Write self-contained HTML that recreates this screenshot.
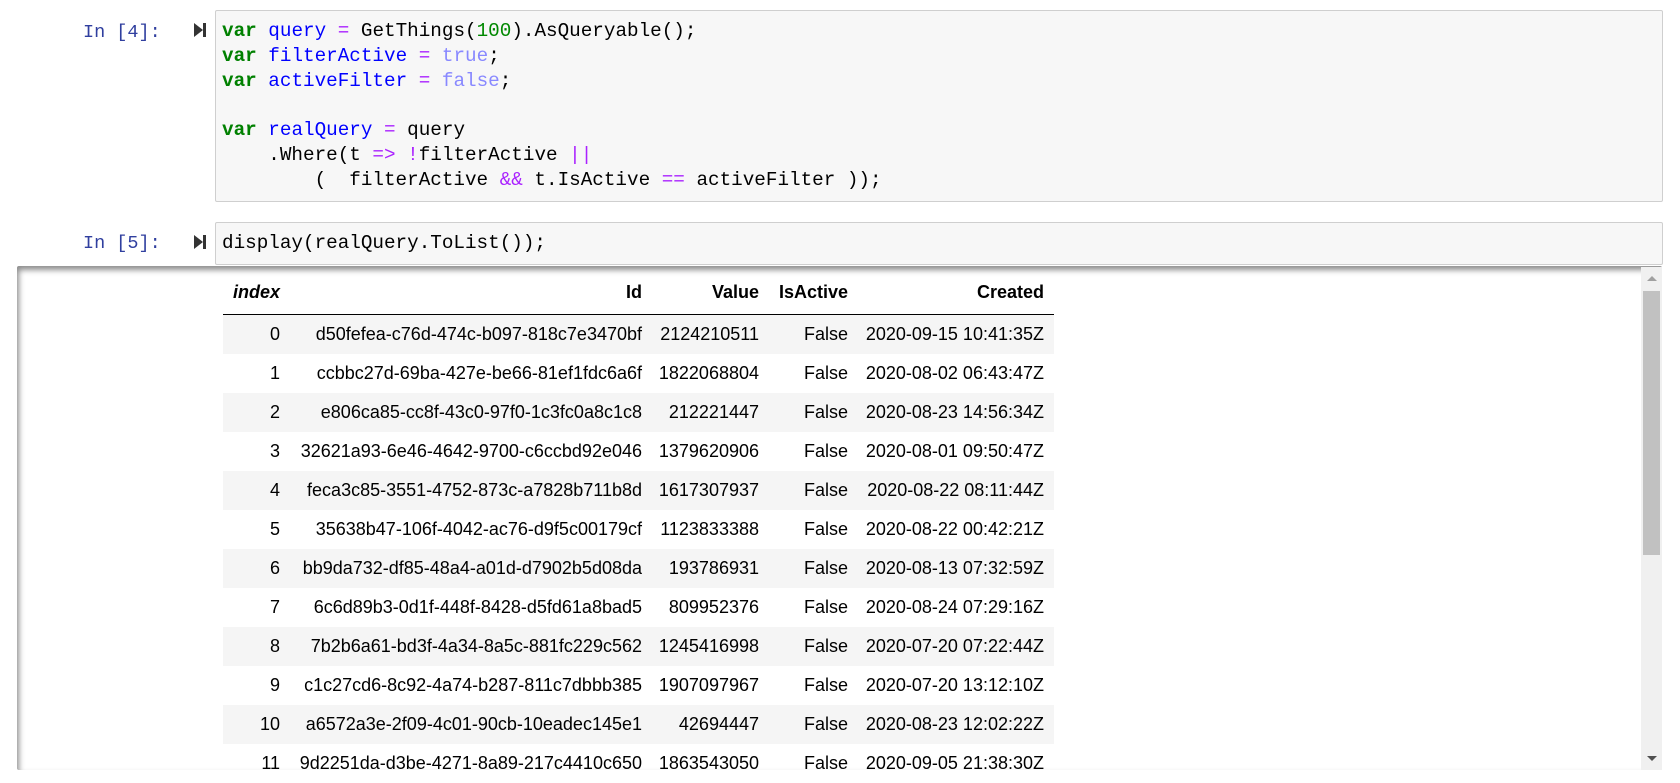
<!DOCTYPE html>
<html><head><meta charset="utf-8"><style>
body{margin:0;width:1680px;height:775px;background:#fff;position:relative;overflow:hidden;font-family:"Liberation Sans",Arial,sans-serif}
.prompt{position:absolute;left:83px;font:18.5px/25px "Liberation Mono",monospace;color:#303F9F}
.run{position:absolute;left:193px;width:14px;height:16px}
.cell{position:absolute;left:215px;width:1448px;background:#f7f7f7;border:1px solid #cfcfcf;border-radius:2px;box-sizing:border-box}
.code{position:absolute;left:222px;font:19.3px/24.8px "Liberation Mono",monospace;color:#000;white-space:pre;margin:0}
.k{color:#008000;font-weight:bold}.v{color:#0000ff}.o{color:#aa22ff}.n{color:#008800}.a{color:#8888ff}
.out{position:absolute;left:17px;top:266px;width:1645px;height:504px;box-shadow:inset 2px 4px 6px rgba(0,0,0,.45);border-radius:2px;overflow:hidden}
table{position:absolute;left:223px;top:270px;border-collapse:collapse;font-size:18px;color:#000;table-layout:fixed}
td,th{text-align:right;padding:0 10px 0 0;height:39px;white-space:nowrap}
th{height:44px;font-weight:bold;border-bottom:1px solid #000;vertical-align:middle}
tbody tr:nth-child(odd){background:#f5f5f5}
.sb{position:absolute;left:1641px;top:267px;width:21px;height:503px;background:#f0f0f0}
.th{position:absolute;left:1643px;top:291px;width:17px;height:264px;background:#c1c1c1}
</style></head><body>
<div class="prompt" style="top:20px">In [4]:</div>
<svg class="run" style="top:22px" viewBox="0 0 14 16"><path d="M1 1 L10 8 L1 15 Z" fill="#333"/><rect x="10" y="1" width="3" height="14" fill="#333"/></svg>
<div class="cell" style="top:10px;height:192px"></div>
<pre class="code" style="top:19px"><span class="k">var</span> <span class="v">query</span> <span class="o">=</span> GetThings(<span class="n">100</span>).AsQueryable();
<span class="k">var</span> <span class="v">filterActive</span> <span class="o">=</span> <span class="a">true</span>;
<span class="k">var</span> <span class="v">activeFilter</span> <span class="o">=</span> <span class="a">false</span>;

<span class="k">var</span> <span class="v">realQuery</span> <span class="o">=</span> query
    .Where(t <span class="o">=&gt;</span> <span class="o">!</span>filterActive <span class="o">||</span>
        (  filterActive <span class="o">&amp;&amp;</span> t.IsActive <span class="o">==</span> activeFilter ));</pre>
<div class="prompt" style="top:231px">In [5]:</div>
<svg class="run" style="top:234px" viewBox="0 0 14 16"><path d="M1 1 L10 8 L1 15 Z" fill="#333"/><rect x="10" y="1" width="3" height="14" fill="#333"/></svg>
<div class="cell" style="top:222px;height:43px"></div>
<pre class="code" style="top:231px">display(realQuery.ToList());</pre>
<div class="out"></div>
<table>
<colgroup><col style="width:67px"><col style="width:362px"><col style="width:117px"><col style="width:89px"><col style="width:196px"></colgroup>
<thead><tr><th><i>index</i></th><th>Id</th><th>Value</th><th>IsActive</th><th>Created</th></tr></thead>
<tbody>
<tr><td>0</td><td>d50fefea-c76d-474c-b097-818c7e3470bf</td><td>2124210511</td><td>False</td><td>2020-09-15 10:41:35Z</td></tr>
<tr><td>1</td><td>ccbbc27d-69ba-427e-be66-81ef1fdc6a6f</td><td>1822068804</td><td>False</td><td>2020-08-02 06:43:47Z</td></tr>
<tr><td>2</td><td>e806ca85-cc8f-43c0-97f0-1c3fc0a8c1c8</td><td>212221447</td><td>False</td><td>2020-08-23 14:56:34Z</td></tr>
<tr><td>3</td><td>32621a93-6e46-4642-9700-c6ccbd92e046</td><td>1379620906</td><td>False</td><td>2020-08-01 09:50:47Z</td></tr>
<tr><td>4</td><td>feca3c85-3551-4752-873c-a7828b711b8d</td><td>1617307937</td><td>False</td><td>2020-08-22 08:11:44Z</td></tr>
<tr><td>5</td><td>35638b47-106f-4042-ac76-d9f5c00179cf</td><td>1123833388</td><td>False</td><td>2020-08-22 00:42:21Z</td></tr>
<tr><td>6</td><td>bb9da732-df85-48a4-a01d-d7902b5d08da</td><td>193786931</td><td>False</td><td>2020-08-13 07:32:59Z</td></tr>
<tr><td>7</td><td>6c6d89b3-0d1f-448f-8428-d5fd61a8bad5</td><td>809952376</td><td>False</td><td>2020-08-24 07:29:16Z</td></tr>
<tr><td>8</td><td>7b2b6a61-bd3f-4a34-8a5c-881fc229c562</td><td>1245416998</td><td>False</td><td>2020-07-20 07:22:44Z</td></tr>
<tr><td>9</td><td>c1c27cd6-8c92-4a74-b287-811c7dbbb385</td><td>1907097967</td><td>False</td><td>2020-07-20 13:12:10Z</td></tr>
<tr><td>10</td><td>a6572a3e-2f09-4c01-90cb-10eadec145e1</td><td>42694447</td><td>False</td><td>2020-08-23 12:02:22Z</td></tr>
<tr><td>11</td><td>9d2251da-d3be-4271-8a89-217c4410c650</td><td>1863543050</td><td>False</td><td>2020-09-05 21:38:30Z</td></tr>
</tbody></table>
<div style="position:absolute;left:0;top:770px;width:1680px;height:5px;background:#fff"></div>
<div class="sb"></div><div class="th"></div>
<svg style="position:absolute;left:1646px;top:274px" width="12" height="8"><path d="M1 7 L6 2 L11 7Z" fill="#a0a0a0"/></svg>
<svg style="position:absolute;left:1646px;top:755px" width="12" height="8"><path d="M1 1 L6 6 L11 1Z" fill="#505050"/></svg>
</body></html>
